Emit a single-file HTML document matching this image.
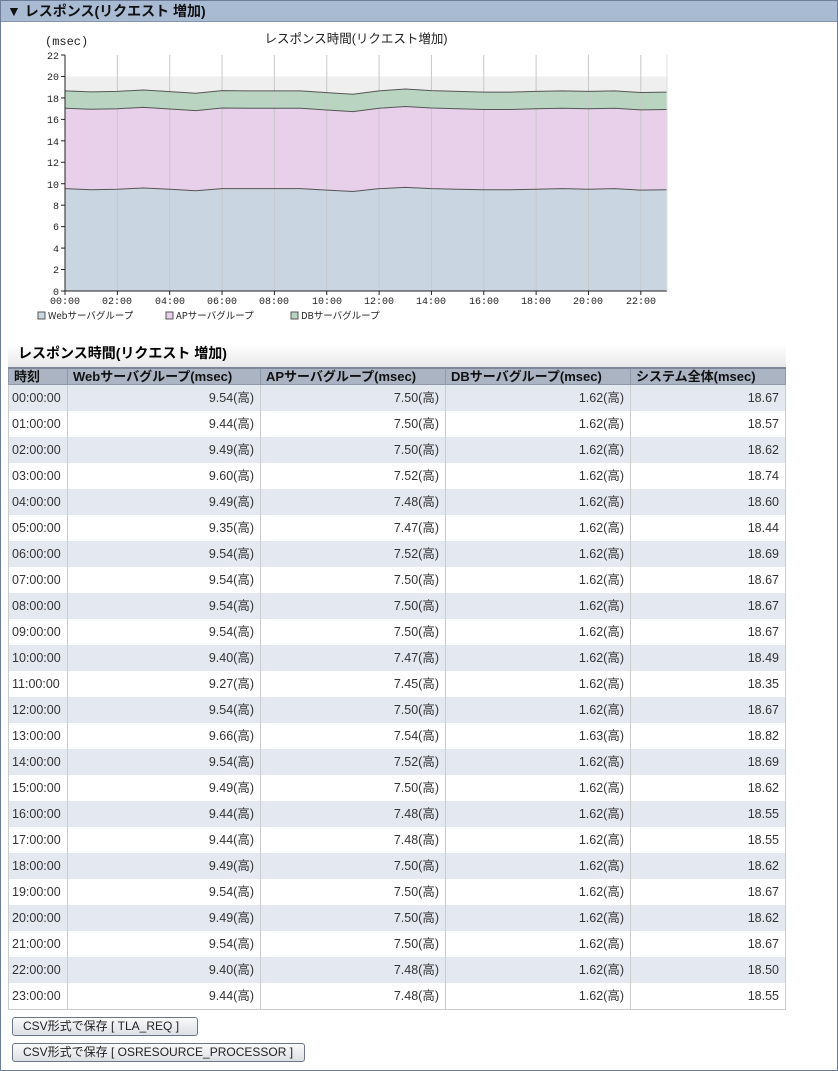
<!DOCTYPE html>
<html><head><meta charset="utf-8">
<style>
body{margin:0;width:838px;height:1071px;background:#fff;font-family:"Liberation Sans","Noto Sans CJK JP",sans-serif;position:relative;overflow:hidden}
.frame{position:absolute;left:0;top:0;width:836px;height:1069px;border:1px solid #6d7c99}
.hdr{position:absolute;left:1px;top:1px;width:836px;height:21px;background:#a9bad3;border-bottom:1px solid #8595b0;font-weight:bold;font-size:14px;line-height:21px;color:#111;padding-left:6px;box-sizing:border-box}
.ttl{position:absolute;left:8px;top:345px;width:778px;height:22px;background:linear-gradient(#fff,#e8e8e8);font-weight:bold;font-size:14px;line-height:16px;padding-left:10px;box-sizing:border-box}
table{position:absolute;left:8px;top:367px;border-collapse:collapse;font-size:12.5px;color:#333}
th{background:#aab4c3;height:15px;line-height:15px;border:1px solid #8f99a8;border-top:2px solid #7e8798;text-align:left;padding:0 5px;font-size:13px;color:#111}
td{height:26px;line-height:26px;border-left:1px solid #ccc;border-right:1px solid #ccc;padding:0 6px;text-align:right;box-sizing:border-box}
td:first-child{text-align:left;padding-left:3px}
tr:nth-child(even) td{background:#e4e8f0}
tr:last-child td{border-bottom:1px solid #ccc}
.btn{position:absolute;left:12px;height:19px;border:1px solid #6d7685;border-radius:3px;background:linear-gradient(#fafafa,#dcdfe4);font-size:12px;line-height:17px;padding:0 10px;box-sizing:border-box;color:#222;white-space:nowrap}
.ax{font-family:"Liberation Mono","Noto Sans CJK JP",monospace;font-size:10px;fill:#222}
</style></head><body>
<div class="frame"></div>
<div class="hdr">▼ レスポンス(リクエスト 増加)</div>
<svg id="ch" style="position:absolute;left:0;top:0" width="838" height="330">
<text x="45" y="45" font-size="12" fill="#222" font-family="Liberation Mono,monospace">(msec)</text>
<text x="356" y="43" font-size="12.5" fill="#222" text-anchor="middle" font-family="Liberation Sans,Noto Sans CJK JP,sans-serif">レスポンス時間(リクエスト増加)</text>
<g id="g"></g>
<text x="48" y="319" class="ax" style="font-family:'Noto Sans CJK JP',sans-serif;font-size:9.5px">Webサーバグループ</text>
<text x="176" y="319" class="ax" style="font-family:'Noto Sans CJK JP',sans-serif;font-size:9.5px">APサーバグループ</text>
<text x="301" y="319" class="ax" style="font-family:'Noto Sans CJK JP',sans-serif;font-size:9.5px">DBサーバグループ</text>
</svg>
<div class="ttl">レスポンス時間(リクエスト 増加)</div>
<table>
<tr><th style="width:48px">時刻</th><th style="width:182px">Webサーバグループ(msec)</th><th style="width:174px">APサーバグループ(msec)</th><th style="width:174px">DBサーバグループ(msec)</th><th style="width:144px">システム全体(msec)</th></tr>
<tr><td>00:00:00</td><td>9.54(高)</td><td>7.50(高)</td><td>1.62(高)</td><td>18.67</td></tr>
<tr><td>01:00:00</td><td>9.44(高)</td><td>7.50(高)</td><td>1.62(高)</td><td>18.57</td></tr>
<tr><td>02:00:00</td><td>9.49(高)</td><td>7.50(高)</td><td>1.62(高)</td><td>18.62</td></tr>
<tr><td>03:00:00</td><td>9.60(高)</td><td>7.52(高)</td><td>1.62(高)</td><td>18.74</td></tr>
<tr><td>04:00:00</td><td>9.49(高)</td><td>7.48(高)</td><td>1.62(高)</td><td>18.60</td></tr>
<tr><td>05:00:00</td><td>9.35(高)</td><td>7.47(高)</td><td>1.62(高)</td><td>18.44</td></tr>
<tr><td>06:00:00</td><td>9.54(高)</td><td>7.52(高)</td><td>1.62(高)</td><td>18.69</td></tr>
<tr><td>07:00:00</td><td>9.54(高)</td><td>7.50(高)</td><td>1.62(高)</td><td>18.67</td></tr>
<tr><td>08:00:00</td><td>9.54(高)</td><td>7.50(高)</td><td>1.62(高)</td><td>18.67</td></tr>
<tr><td>09:00:00</td><td>9.54(高)</td><td>7.50(高)</td><td>1.62(高)</td><td>18.67</td></tr>
<tr><td>10:00:00</td><td>9.40(高)</td><td>7.47(高)</td><td>1.62(高)</td><td>18.49</td></tr>
<tr><td>11:00:00</td><td>9.27(高)</td><td>7.45(高)</td><td>1.62(高)</td><td>18.35</td></tr>
<tr><td>12:00:00</td><td>9.54(高)</td><td>7.50(高)</td><td>1.62(高)</td><td>18.67</td></tr>
<tr><td>13:00:00</td><td>9.66(高)</td><td>7.54(高)</td><td>1.63(高)</td><td>18.82</td></tr>
<tr><td>14:00:00</td><td>9.54(高)</td><td>7.52(高)</td><td>1.62(高)</td><td>18.69</td></tr>
<tr><td>15:00:00</td><td>9.49(高)</td><td>7.50(高)</td><td>1.62(高)</td><td>18.62</td></tr>
<tr><td>16:00:00</td><td>9.44(高)</td><td>7.48(高)</td><td>1.62(高)</td><td>18.55</td></tr>
<tr><td>17:00:00</td><td>9.44(高)</td><td>7.48(高)</td><td>1.62(高)</td><td>18.55</td></tr>
<tr><td>18:00:00</td><td>9.49(高)</td><td>7.50(高)</td><td>1.62(高)</td><td>18.62</td></tr>
<tr><td>19:00:00</td><td>9.54(高)</td><td>7.50(高)</td><td>1.62(高)</td><td>18.67</td></tr>
<tr><td>20:00:00</td><td>9.49(高)</td><td>7.50(高)</td><td>1.62(高)</td><td>18.62</td></tr>
<tr><td>21:00:00</td><td>9.54(高)</td><td>7.50(高)</td><td>1.62(高)</td><td>18.67</td></tr>
<tr><td>22:00:00</td><td>9.40(高)</td><td>7.48(高)</td><td>1.62(高)</td><td>18.50</td></tr>
<tr><td>23:00:00</td><td>9.44(高)</td><td>7.48(高)</td><td>1.62(高)</td><td>18.55</td></tr>
</table>
<div class="btn" style="top:1017px;width:186px">CSV形式で保存 [ TLA_REQ ]</div>
<div class="btn" style="top:1043px;width:293px">CSV形式で保存 [ OSRESOURCE_PROCESSOR ]</div>
<script>
var W=[9.54,9.44,9.49,9.60,9.49,9.35,9.54,9.54,9.54,9.54,9.40,9.27,9.54,9.66,9.54,9.49,9.44,9.44,9.49,9.54,9.49,9.54,9.40,9.44];
var A=[7.50,7.50,7.50,7.52,7.48,7.47,7.52,7.50,7.50,7.50,7.47,7.45,7.50,7.54,7.52,7.50,7.48,7.48,7.50,7.50,7.50,7.50,7.48,7.48];
var D=W.map(function(_,i){return i==13?1.63:1.62});
var x0=65,x1=667,y0=291,s=236/22,dx=(x1-x0)/23;
function X(i){return x0+i*dx}function Y(v){return y0-v*s}
var h='';
h+='<rect x="'+x0+'" y="'+Y(22)+'" width="'+(x1-x0)+'" height="'+(22*s)+'" fill="#fff"/>';
h+='<rect x="'+x0+'" y="'+Y(20)+'" width="'+(x1-x0)+'" height="'+(20*s)+'" fill="#efefef"/>';
var c1=W,c2=W.map(function(v,i){return v+A[i]}),c3=c2.map(function(v,i){return v+D[i]});
function area(lo,hi,f){var p='M';for(var i=0;i<24;i++)p+=X(i)+','+Y(hi[i])+' ';for(i=23;i>=0;i--)p+='L'+X(i)+','+Y(lo?lo[i]:0)+' ';return '<path d="'+p+'Z" fill="'+f+'"/>'}
h+=area(null,c1,'#c9d6e2')+area(c1,c2,'#e8d0ea')+area(c2,c3,'#b9d5c2');
for(var k=1;k<=11;k++){var gx=X(2*k);h+='<line x1="'+gx+'" y1="'+Y(22)+'" x2="'+gx+'" y2="'+y0+'" stroke="#c8c8c8"/>';}
function line(a){var p='M';for(var i=0;i<24;i++)p+=X(i)+','+Y(a[i])+' ';return '<path d="'+p+'" fill="none" stroke="#555" stroke-width="1"/>'}
h+=line(c1)+line(c2)+line(c3);
h+='<line x1="'+x0+'" y1="'+Y(22)+'" x2="'+x0+'" y2="'+y0+'" stroke="#222"/><line x1="'+x0+'" y1="'+y0+'" x2="'+x1+'" y2="'+y0+'" stroke="#222"/>';
h+='<line x1="'+x1+'" y1="'+Y(22)+'" x2="'+x1+'" y2="'+y0+'" stroke="#ddd"/>';
for(var v=0;v<=22;v+=2){h+='<line x1="'+(x0-4)+'" y1="'+Y(v)+'" x2="'+x0+'" y2="'+Y(v)+'" stroke="#222"/>';}
for(k=0;k<=11;k++){h+='<line x1="'+X(2*k)+'" y1="'+y0+'" x2="'+X(2*k)+'" y2="'+(y0+4)+'" stroke="#222"/>';}
document.getElementById('g').innerHTML=h;
</script>
<svg style="position:absolute;left:0;top:0" width="838" height="330">
<g class="ax" text-anchor="end">
<text x="59" y="59">22</text><text x="59" y="80">20</text><text x="59" y="102">18</text><text x="59" y="123">16</text><text x="59" y="145">14</text><text x="59" y="166">12</text><text x="59" y="188">10</text><text x="59" y="209">8</text><text x="59" y="230">6</text><text x="59" y="252">4</text><text x="59" y="273">2</text><text x="59" y="295">0</text>
</g>
<g class="ax" text-anchor="middle">
<text x="65" y="304">00:00</text><text x="117" y="304">02:00</text><text x="170" y="304">04:00</text><text x="222" y="304">06:00</text><text x="274" y="304">08:00</text><text x="327" y="304">10:00</text><text x="379" y="304">12:00</text><text x="431" y="304">14:00</text><text x="484" y="304">16:00</text><text x="536" y="304">18:00</text><text x="588" y="304">20:00</text><text x="641" y="304">22:00</text>
</g>
<rect x="38" y="312" width="7" height="7" fill="#c9d6e2" stroke="#555"/>
<rect x="166" y="312" width="7" height="7" fill="#e8d0ea" stroke="#555"/>
<rect x="291" y="312" width="7" height="7" fill="#b9d5c2" stroke="#555"/>
</svg>
</body></html>
